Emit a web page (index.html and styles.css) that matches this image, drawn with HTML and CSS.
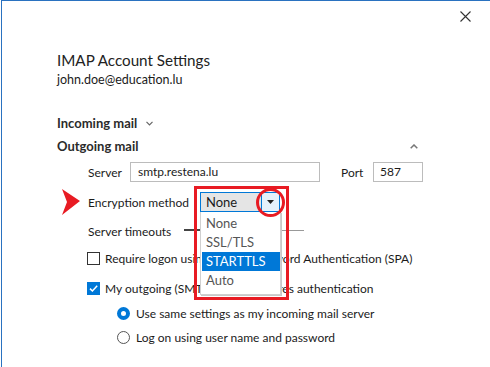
FILE: index.html
```html
<!DOCTYPE html>
<html lang="en">
<head>
  <meta charset="UTF-8">
  <title>IMAP Account Settings</title>
  <link rel="stylesheet" href="styles.css">
</head>
<body>

  <div class="dialog">
    <!-- Close button -->
    <button class="close-button" aria-label="Close">
      <svg width="11" height="11" viewBox="0 0 11 11"><path d="M0.5 0.5 L10.5 10.5 M10.5 0.5 L0.5 10.5" stroke="#333" stroke-width="1.1" fill="none"/></svg>
    </button>

    <!-- Red pointer annotation -->
    <svg class="pointer-arrow" width="19" height="27" viewBox="0 0 19 27"><polygon points="0,0 18,12 0,26 5,13" fill="#e81b23"/></svg>

    <div class="content">
      <h1>IMAP Account Settings</h1>
      <p class="account">john.doe@education.lu</p>

      <div class="section-head">
        <span>Incoming mail</span>
        <svg class="chevron" width="7" height="5" viewBox="0 0 7 5"><path d="M0.5 0.8 L3.5 3.8 L6.5 0.8" stroke="#666" stroke-width="1.2" fill="none"/></svg>
      </div>

      <div class="section-head outgoing">
        <span>Outgoing mail</span>
        <svg class="chevron-up" width="8" height="5" viewBox="0 0 8 5"><path d="M0.7 4.3 L4 1 L7.3 4.3" stroke="#777" stroke-width="1.5" fill="none"/></svg>
      </div>

      <div class="fields">
        <div class="field-row server-row">
          <label class="label server-label">Server</label>
          <div class="text-input server-input">smtp.restena.lu</div>
          <label class="label port-label">Port</label>
          <div class="text-input port-input">587</div>
        </div>

        <div class="field-row encryption-row">
          <label class="label encryption-label">Encryption method</label>
          <div class="combo">
            <div class="combo-box">
              <span class="combo-value">None</span>
              <span class="combo-button">
                <svg width="7" height="4" viewBox="0 0 7 4"><polygon points="0,0 7,0 3.5,4" fill="#222"/></svg>
              </span>
            </div>
            <ul class="combo-list">
              <li>None</li>
              <li>SSL/TLS</li>
              <li class="selected">STARTTLS</li>
              <li>Auto</li>
            </ul>
            <!-- annotations -->
            <div class="mark-box"></div>
            <div class="mark-circle"></div>
          </div>
        </div>

        <div class="field-row timeout-row">
          <label class="label timeout-label">Server timeouts</label>
          <div class="slider">
            <div class="slider-fill"></div>
          </div>
        </div>

        <div class="check-row spa-row">
          <span class="checkbox"></span>
          <span>Require logon using Secure Password Authentication (SPA)</span>
        </div>

        <div class="check-row auth-row">
          <span class="checkbox checked">
            <svg width="11" height="11" viewBox="0 0 11 11"><path d="M2 5.6 L4.4 8 L9.2 2.8" stroke="#fff" stroke-width="1.5" fill="none"/></svg>
          </span>
          <span>My outgoing (SMTP) server requires authentication</span>
        </div>

        <div class="radio-row same-row">
          <span class="radio selected"></span>
          <span>Use same settings as my incoming mail server</span>
        </div>

        <div class="radio-row logon-row">
          <span class="radio"></span>
          <span>Log on using user name and password</span>
        </div>
      </div>
    </div>
  </div>

</body>
</html>
```

FILE: styles.css
```css
/* General Styles */
* {
  margin: 0;
  padding: 0;
  box-sizing: border-box;
}

body {
  font-family: Lato, "Noto Sans", sans-serif;
  font-size: 12px;
  color: #1b1b1b;
  background-color: #fff;
  width: 490px;
  height: 367px;
  overflow: hidden;
  white-space: nowrap;
}

/* Dialog frame */
.dialog {
  position: relative;
  margin-left: 1px;
  height: 367px;
  border-top: 1px solid #2a72c0;
  border-left: 1px solid #2a72c0;
}

.close-button {
  position: absolute;
  top: 10px;
  right: 19px;
  width: 11px;
  height: 11px;
  border: none;
  background: none;
  display: flex;
}

.pointer-arrow {
  position: absolute;
  left: 60px;
  top: 188px;
}

.content {
  padding: 49px 0 0 55px;
}

h1 {
  font-size: 15.2px;
  font-weight: normal;
  line-height: 20px;
  color: #222;
}

.account {
  font-size: 12.5px;
  line-height: 18px;
  margin-top: 1px;
}

/* Section headers */
.section-head {
  display: flex;
  align-items: center;
  height: 18px;
  margin-top: 25px;
  font-size: 13px;
  font-weight: bold;
  color: #2b2b2b;
}

.section-head .chevron {
  margin-left: 9px;
}

.section-head.outgoing {
  margin-top: 5px;
  width: 361px;
}

.chevron-up {
  margin-left: auto;
}

/* Fields */
.fields {
  padding-left: 31px;
}

.field-row {
  display: flex;
  align-items: center;
  height: 20px;
}

.label {
  flex-shrink: 0;
}

.server-row {
  margin-top: 7px;
}

.server-label {
  width: 42px;
}

.text-input {
  height: 20px;
  border: 1px solid #bcbcbc;
  padding-left: 7px;
  line-height: 18px;
}

.server-input {
  width: 190px;
}

.port-label {
  margin-left: 21px;
  width: 32px;
}

.port-input {
  width: 50px;
  padding-left: 6px;
}

.encryption-row {
  margin-top: 10px;
}

.encryption-label {
  width: 112px;
}

/* Combo box */
.combo {
  position: relative;
  width: 80px;
  height: 20px;
}

.combo-box {
  display: flex;
  height: 20px;
  border: 1px solid #0078d7;
  background-color: #e5e5e5;
}

.combo-value {
  flex: 1;
  padding-left: 5px;
  line-height: 18px;
  font-size: 13px;
}

.combo-button {
  width: 18px;
  border-left: 1px solid #0078d7;
  background-color: #e5f1fb;
  display: flex;
  align-items: center;
  justify-content: center;
}

.combo-list {
  position: absolute;
  left: 0;
  top: 20px;
  width: 81px;
  height: 83px;
  list-style: none;
  background-color: #fff;
  border: 1px solid #d0d0d0;
  border-top: none;
  padding: 2px 0 0 1px;
  box-shadow: 1px 1px 0 #c8c8c8;
  z-index: 2;
}

.combo-list li {
  height: 19px;
  line-height: 19px;
  padding-left: 4px;
  width: 78px;
  font-size: 13px;
  color: #555;
}

.combo-list li.selected {
  background-color: #0078d7;
  color: #fff;
}

/* Red annotation marks */
.mark-box {
  position: absolute;
  left: -6px;
  top: -6px;
  width: 95px;
  height: 114px;
  border: 3px solid #e81b23;
  z-index: 3;
}

.mark-circle {
  position: absolute;
  left: 56px;
  top: -4px;
  width: 29px;
  height: 29px;
  border: 3px solid #e81b23;
  border-radius: 50%;
  z-index: 3;
}

/* Timeout slider */
.timeout-row {
  margin-top: 10px;
  height: 18px;
}

.timeout-label {
  width: 96px;
}

.slider {
  width: 120px;
  height: 1px;
  background-color: #999;
  position: relative;
  margin-top: -2px;
}

.slider-fill {
  width: 50px;
  height: 2px;
  background-color: #444;
  margin-top: -1px;
}

/* Checkboxes and radios */
.check-row,
.radio-row {
  display: flex;
  align-items: center;
  height: 18px;
}

.spa-row {
  margin-top: 9px;
}

.auth-row {
  margin-top: 12px;
}

.checkbox {
  width: 13px;
  height: 13px;
  border: 1px solid #333;
  margin: 0 5px 0 -1px;
  flex-shrink: 0;
  display: flex;
  align-items: center;
  justify-content: center;
}

.checkbox.checked {
  border-color: #0078d7;
  background-color: #0078d7;
}

.radio-row {
  padding-left: 29px;
}

.same-row {
  margin-top: 7px;
}

.logon-row {
  margin-top: 6px;
}

.radio {
  width: 13px;
  height: 13px;
  border: 1px solid #555;
  border-radius: 50%;
  margin-right: 6px;
  flex-shrink: 0;
}

.radio.selected {
  border: 4px solid #0078d7;
}
```
